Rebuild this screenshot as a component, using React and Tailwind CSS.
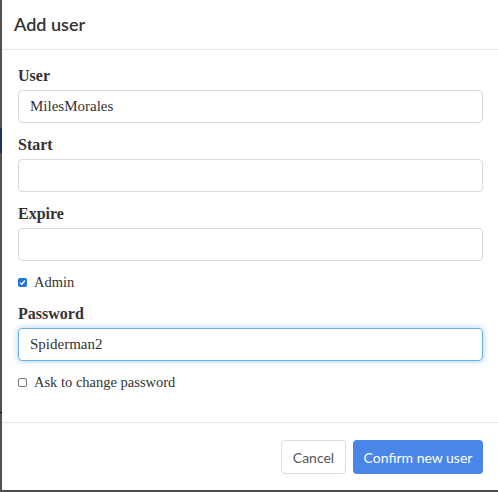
export default function App() {
  const serif = { fontFamily: '"Liberation Serif", "Times New Roman", serif' }

  const Field = ({ label, value = '', focused = false }) => (
    <div className="mb-[11px]">
      <div className="text-[16px] font-bold text-[#333] leading-[21px] mb-1" style={serif}>{label}</div>
      <div
        className={`h-[33px] rounded-[4px] border px-[11px] flex items-center text-[15px] text-[#333] ${
          focused ? 'border-[#66afe9] shadow-[0_0_6px_rgba(102,175,233,0.6)]' : 'border-[#d9d9d9]'
        }`}
        style={serif}
      >
        {value}
      </div>
    </div>
  )

  const Check = ({ checked, label, className = '' }) => (
    <div className={`flex items-center h-[21px] ${className}`}>
      {checked ? (
        <span className="w-[9px] h-[9px] rounded-[2px] bg-[#1a73e8] flex items-center justify-center">
          <svg width="7" height="7" viewBox="0 0 8 8">
            <path d="M1.2 4.2 L3.2 6 L6.8 1.8" fill="none" stroke="white" strokeWidth="1.6" />
          </svg>
        </span>
      ) : (
        <span className="w-[9px] h-[9px] rounded-[2px] border border-[#767676] bg-white" />
      )}
      <span className="ml-[7px] text-[14.5px] text-[#333]" style={serif}>{label}</span>
    </div>
  )

  return (
    <div className="w-[498px] h-[492px] bg-[#4e4e4e] flex flex-col">
      <div className="flex h-[490px]">
        {/* backdrop strip */}
        <div className="w-[2px] flex flex-col">
          <div className="h-[128px] bg-[#515151]" />
          <div className="h-[25px] bg-[#1b355a]" />
          <div className="h-[259px] bg-[#515151]" />
          <div className="h-[1px] bg-black" />
          <div className="flex-1 bg-[#515151]" />
        </div>

        {/* dialog */}
        <div className="w-[496px] bg-white flex flex-col">
          <div className="h-[50px] border-b border-[#e5e5e5] flex items-center pl-[12px]">
            <h2 className="text-[18px] font-semibold text-[#333]" style={{ fontFamily: 'Lato, "Open Sans", sans-serif' }}>
              Add user
            </h2>
          </div>

          <div className="pl-4 pr-[15px] pt-[15px] pb-[29px]">
            <Field label="User" value="MilesMorales" />
            <Field label="Start" />
            <Field label="Expire" />
            <Check checked label="Admin" className="mb-[10px]" />
            <Field label="Password" value="Spiderman2" focused />
            <Check label="Ask to change password" />
          </div>

          <div
            className="border-t border-[#e5e5e5] flex justify-end gap-[7px] pt-[17px] pr-[15px]"
            style={{ fontFamily: 'Lato, "Open Sans", sans-serif' }}
          >
            <button className="h-[34px] w-[65px] rounded-[4px] border border-[#dcdcdc] bg-white text-[14px] text-[#555]">
              Cancel
            </button>
            <button className="h-[34px] w-[130px] rounded-[4px] bg-[#4a86e8] text-[14px] text-white">
              Confirm new user
            </button>
          </div>
        </div>
      </div>
      <div className="flex-1" />
    </div>
  )
}
